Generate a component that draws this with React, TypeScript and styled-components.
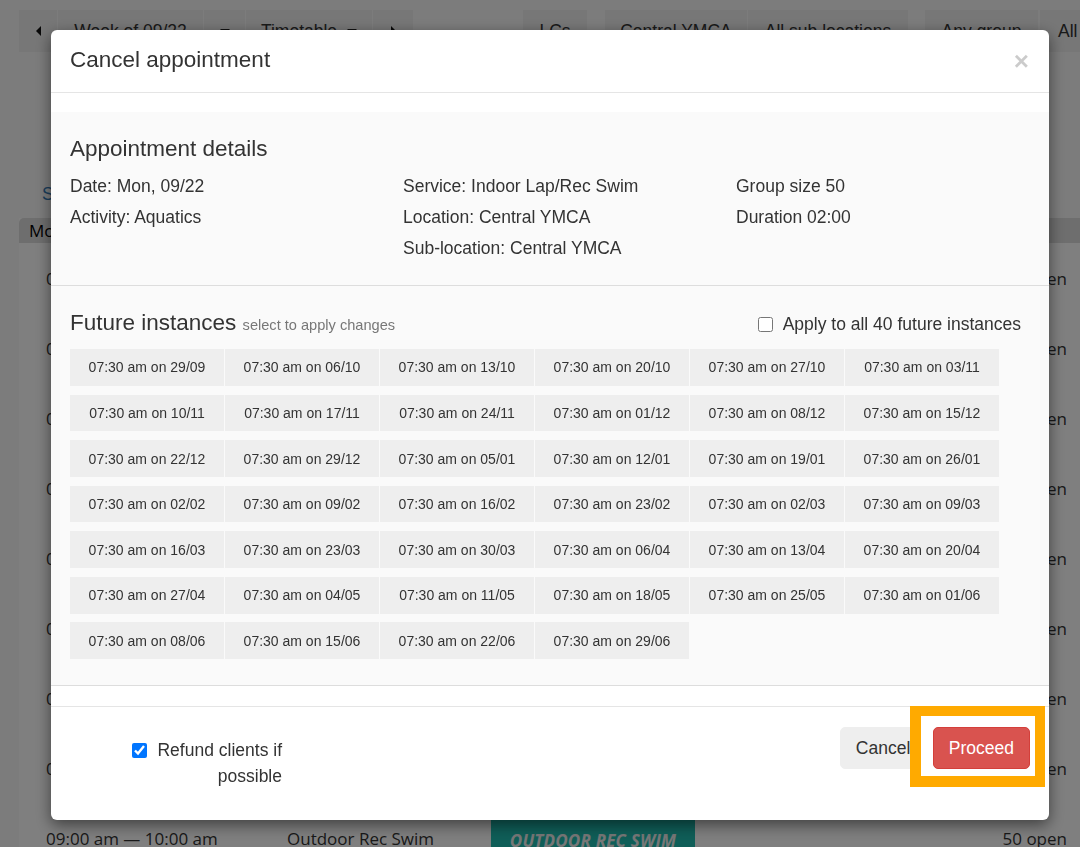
import React from "react";
import styled, { createGlobalStyle, css } from "styled-components";

const GlobalStyle = createGlobalStyle`
  html, body {
    margin: 0;
    padding: 0;
    overflow: hidden;
    background: #f9f9f9;
  }
  * { box-sizing: border-box; }
`;

/* ---------- background page ---------- */

const Page = styled.div`
  font-family: "Liberation Sans", Arial, sans-serif;
  color: #333;
  font-size: 17.5px;
  padding: 10px 0 0 19px;
  height: 847px;
`;

const Toolbar = styled.div`
  display: flex;
  align-items: stretch;
  height: 42px;
`;

const ToolGroup = styled.div<{ $ml?: number }>`
  display: flex;
  gap: 1px;
  margin-left: ${(p) => p.$ml ?? 0}px;
`;

const ToolButton = styled.div<{ $w?: number }>`
  display: flex;
  align-items: center;
  justify-content: center;
  gap: 10px;
  background: #eee;
  padding: 0 18px;
  ${(p) =>
    p.$w &&
    css`
      width: ${p.$w}px;
      padding: 0;
    `}
  white-space: nowrap;
  color: #333;
`;

const Tri = styled.span<{ $dir: "left" | "right" | "down" }>`
  display: inline-block;
  width: 0;
  height: 0;
  ${(p) =>
    p.$dir === "left"
      ? css`
          border-top: 5px solid transparent;
          border-bottom: 5px solid transparent;
          border-right: 5px solid #111;
        `
      : p.$dir === "right"
      ? css`
          border-top: 5px solid transparent;
          border-bottom: 5px solid transparent;
          border-left: 5px solid #111;
        `
      : css`
          border-left: 5px solid transparent;
          border-right: 5px solid transparent;
          border-top: 5px solid #222;
        `}
`;

const LinkLine = styled.div`
  margin: 130px 0 0 23px;
  color: #337ab7;
  line-height: 25px;
  height: 36px;
`;

const Table = styled.div`
  background: #fff;
`;

const TableHead = styled.div`
  background: #ddd;
  height: 25px;
  display: flex;
  align-items: center;
  padding-left: 10px;
  border-top-left-radius: 5px;
  font-family: "Open Sans", sans-serif;
  font-size: 17px;
  color: #000;
`;

const Row = styled.div`
  height: 70px;
  display: grid;
  grid-template-columns: 241px 204px 204px 1fr;
  align-items: center;
  padding: 0 13px 0 27px;
  font-family: "Open Sans", sans-serif;
  font-size: 17px;
  color: #333;
`;

const RowRight = styled.div`
  text-align: right;
`;

const Badge = styled.div`
  background: #1fbcb0;
  color: #eee;
  height: 40px;
  margin-top: 17px;
  align-self: start;
  display: flex;
  align-items: center;
  justify-content: center;
  font-weight: 700;
  font-style: italic;
  font-size: 17px;
  letter-spacing: 0.2px;
`;

const Overlay = styled.div`
  position: fixed;
  inset: 0;
  background: rgba(0, 0, 0, 0.5);
`;

/* ---------- modal ---------- */

const Modal = styled.div`
  position: fixed;
  top: 30px;
  left: 51px;
  width: 998px;
  background: #fff;
  border-radius: 6px;
  box-shadow: 0 5px 15px rgba(0, 0, 0, 0.5);
  font-family: "Liberation Sans", Arial, sans-serif;
  color: #333;
  font-size: 17.5px;
`;

const Header = styled.div`
  height: 63px;
  display: flex;
  align-items: center;
  justify-content: space-between;
  padding: 0 19px 1px;
  border-bottom: 1px solid #e5e5e5;
`;

const Title = styled.div`
  font-size: 22.5px;
  line-height: 1.1;
`;

const Close = styled.span`
  font-size: 26px;
  font-weight: 700;
  line-height: 1;
  color: #000;
  opacity: 0.2;
  margin-right: 1px;
`;

const Body = styled.div`
  padding-top: 19px;
`;

const Section = styled.div<{ $pb: number }>`
  background: #fafafa;
  border-bottom: 1px solid #ddd;
  padding: 25px 19px ${(p) => p.$pb}px;
`;

const SectionTitle = styled.div`
  font-size: 22.5px;
  line-height: 24px;
  height: 24px;
  white-space: nowrap;
`;

const Hint = styled.span`
  font-size: 14.6px;
  color: #777;
`;

const DetailGrid = styled.div`
  margin-top: 9.5px;
  display: grid;
  grid-template-columns: 333px 333px 1fr;
`;

const DetailLine = styled.div`
  line-height: 31px;
  height: 31px;
`;

const SectionHead = styled.div`
  display: flex;
  justify-content: space-between;
  align-items: center;
  height: 24px;
`;

const CheckLabel = styled.label`
  display: flex;
  align-items: center;
  gap: 10px;
  margin-right: 9px;
  margin-top: 2px;
`;

const Check = styled.input`
  width: 15px;
  height: 15px;
  margin: 0;
`;

const InstanceGrid = styled.div`
  margin-top: 14px;
  display: grid;
  grid-template-columns: repeat(6, 154px);
  column-gap: 1px;
  row-gap: 8.9px;
`;

const Tile = styled.div`
  height: 36.7px;
  background: #eee;
  display: flex;
  align-items: center;
  justify-content: center;
  font-size: 14px;
  color: #333;
`;

const Spacer = styled.div`
  height: 20px;
`;

const Footer = styled.div`
  height: 114px;
  border-top: 1px solid #e5e5e5;
  display: flex;
  justify-content: space-between;
  align-items: flex-start;
  padding: 20px 19px 0;
`;

const RefundCol = styled.label`
  width: 212px;
  margin-top: 10px;
  text-align: right;
  line-height: 26px;
`;

const RefundCheck = styled.input`
  width: 15px;
  height: 15px;
  margin: 0 10px 0 0;
  vertical-align: -2px;
`;

const Buttons = styled.div`
  display: flex;
  gap: 6.5px;
`;

const Button = styled.button<{ $variant: "default" | "danger" }>`
  font-family: "Liberation Sans", Arial, sans-serif;
  font-size: 17.5px;
  line-height: 25px;
  padding: 7.5px 15px;
  border-radius: 5px;
  border: 1px solid;
  position: relative;
  ${(p) =>
    p.$variant === "danger"
      ? css`
          background: #d9534f;
          border-color: #d43f3a;
          color: #fff;
          z-index: 1;
        `
      : css`
          background: #eee;
          border-color: #eee;
          color: #333;
        `}
`;

const Highlight = styled.div`
  position: relative;
  display: flex;
  &::before {
    content: "";
    position: absolute;
    left: -23px;
    right: -15px;
    top: -21px;
    bottom: -18px;
    background: #fff;
    border: 11px solid #ffaa00;
    border-right-width: 10px;
    border-top-width: 10px;
  }
`;

const instances = [
  "29/09", "06/10", "13/10", "20/10", "27/10", "03/11",
  "10/11", "17/11", "24/11", "01/12", "08/12", "15/12",
  "22/12", "29/12", "05/01", "12/01", "19/01", "26/01",
  "02/02", "09/02", "16/02", "23/02", "02/03", "09/03",
  "16/03", "23/03", "30/03", "06/04", "13/04", "20/04",
  "27/04", "04/05", "11/05", "18/05", "25/05", "01/06",
  "08/06", "15/06", "22/06", "29/06",
];

const rows = [
  "07:30 am — 09:30 am",
  "08:00 am — 09:00 am",
  "08:00 am — 10:00 am",
  "08:30 am — 09:30 am",
  "08:30 am — 10:30 am",
  "09:00 am — 10:00 am",
  "09:00 am — 11:00 am",
  "09:00 am — 10:00 am",
];

export default function App() {
  return (
    <>
      <GlobalStyle />
      <Page>
        <Toolbar>
          <ToolGroup>
            <ToolButton $w={38}>
              <Tri $dir="left" />
            </ToolButton>
            <ToolButton $w={145}>Week of 09/22</ToolButton>
            <ToolButton $w={41}>
              <Tri $dir="down" />
            </ToolButton>
            <ToolButton $w={126}>
              Timetable <Tri $dir="down" />
            </ToolButton>
            <ToolButton $w={40}>
              <Tri $dir="right" />
            </ToolButton>
          </ToolGroup>
          <ToolGroup $ml={110}>
            <ToolButton $w={64}>LCs</ToolButton>
          </ToolGroup>
          <ToolGroup $ml={18}>
            <ToolButton $w={142}>Central YMCA</ToolButton>
            <ToolButton $w={160}>All sub locations</ToolButton>
          </ToolGroup>
          <ToolGroup $ml={17}>
            <ToolButton $w={113}>Any group</ToolButton>
          </ToolGroup>
          <ToolGroup $ml={2}>
            <ToolButton>All times</ToolButton>
          </ToolGroup>
        </Toolbar>
        <LinkLine>Show all</LinkLine>
        <Table>
          <TableHead>Mon, 09/22</TableHead>
          {rows.map((r, i) => (
            <Row key={i}>
              <div>{r}</div>
              <div>Indoor Lap/Rec Swim</div>
              <div />
              <RowRight>50 open</RowRight>
            </Row>
          ))}
          <Row>
            <div>09:00 am — 10:00 am</div>
            <div>Outdoor Rec Swim</div>
            <Badge>OUTDOOR REC SWIM</Badge>
            <RowRight>50 open</RowRight>
          </Row>
        </Table>
      </Page>
      <Overlay />
      <Modal>
        <Header>
          <Title>Cancel appointment</Title>
          <Close>×</Close>
        </Header>
        <Body>
          <Section $pb={21.5}>
            <SectionTitle>Appointment details</SectionTitle>
            <DetailGrid>
              <div>
                <DetailLine>Date: Mon, 09/22</DetailLine>
                <DetailLine>Activity: Aquatics</DetailLine>
              </div>
              <div>
                <DetailLine>Service: Indoor Lap/Rec Swim</DetailLine>
                <DetailLine>Location: Central YMCA</DetailLine>
                <DetailLine>Sub-location: Central YMCA</DetailLine>
              </div>
              <div>
                <DetailLine>Group size 50</DetailLine>
                <DetailLine>Duration 02:00</DetailLine>
              </div>
            </DetailGrid>
          </Section>
          <Section $pb={26}>
            <SectionHead>
              <SectionTitle>
                Future instances <Hint>select to apply changes</Hint>
              </SectionTitle>
              <CheckLabel>
                <Check type="checkbox" />
                Apply to all 40 future instances
              </CheckLabel>
            </SectionHead>
            <InstanceGrid>
              {instances.map((d) => (
                <Tile key={d}>{`07:30 am on ${d}`}</Tile>
              ))}
            </InstanceGrid>
          </Section>
          <Spacer />
        </Body>
        <Footer>
          <RefundCol>
            <RefundCheck type="checkbox" defaultChecked />
            Refund clients if possible
          </RefundCol>
          <Buttons>
            <Button $variant="default">Cancel</Button>
            <Highlight>
              <Button $variant="danger">Proceed</Button>
            </Highlight>
          </Buttons>
        </Footer>
      </Modal>
    </>
  );
}
